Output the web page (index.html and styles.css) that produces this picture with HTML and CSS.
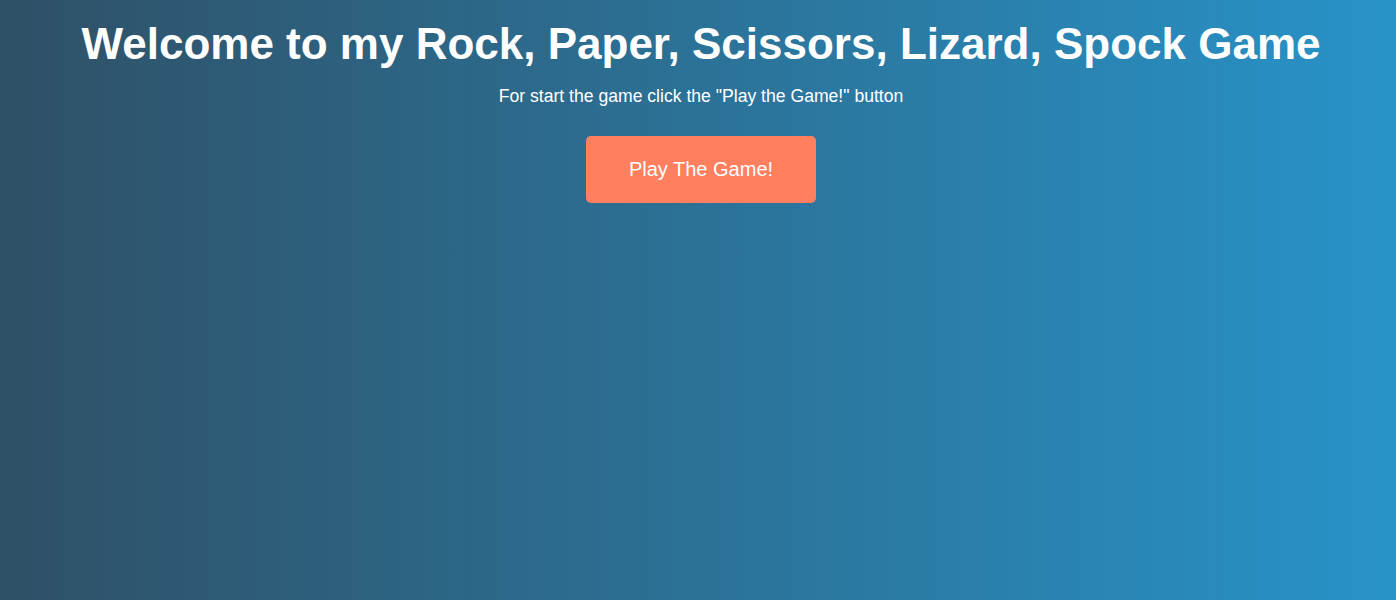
FILE: index.html
```html
<!DOCTYPE html>
<html>
<head>
<meta charset="utf-8">
<link rel="stylesheet" href="styles.css">
</head>
<body>
<main class="intro">
  <h1 class="title">Welcome to my Rock, Paper, Scissors, Lizard, Spock Game</h1>
  <p class="lead">For start the game click the "Play the Game!" button</p>
  <button class="play-btn">Play The Game!</button>
</main>
</body>
</html>
```
FILE: styles.css
```css
html, body {
  margin: 0;
  height: 100%;
}
body {
  background: linear-gradient(to right, #2f5066, #2893c8);
  font-family: "Liberation Sans", Arial, sans-serif;
  color: #fff;
}
.intro {
  display: flex;
  flex-direction: column;
  align-items: center;
  text-align: center;
  padding-left: 6px;
}
.title {
  margin: 18px 0 0;
  font-size: 44px;
  font-weight: bold;
  line-height: 52px;
}
.lead {
  margin: 16px 0 0;
  font-size: 17.6px;
  line-height: 20px;
}
.play-btn {
  margin-top: 30px;
  width: 230px;
  height: 67px;
  background: #ff7f5f;
  color: #fff;
  border: none;
  border-radius: 5px;
  font-family: "Liberation Sans", Arial, sans-serif;
  font-size: 20px;
  cursor: pointer;
}
```
